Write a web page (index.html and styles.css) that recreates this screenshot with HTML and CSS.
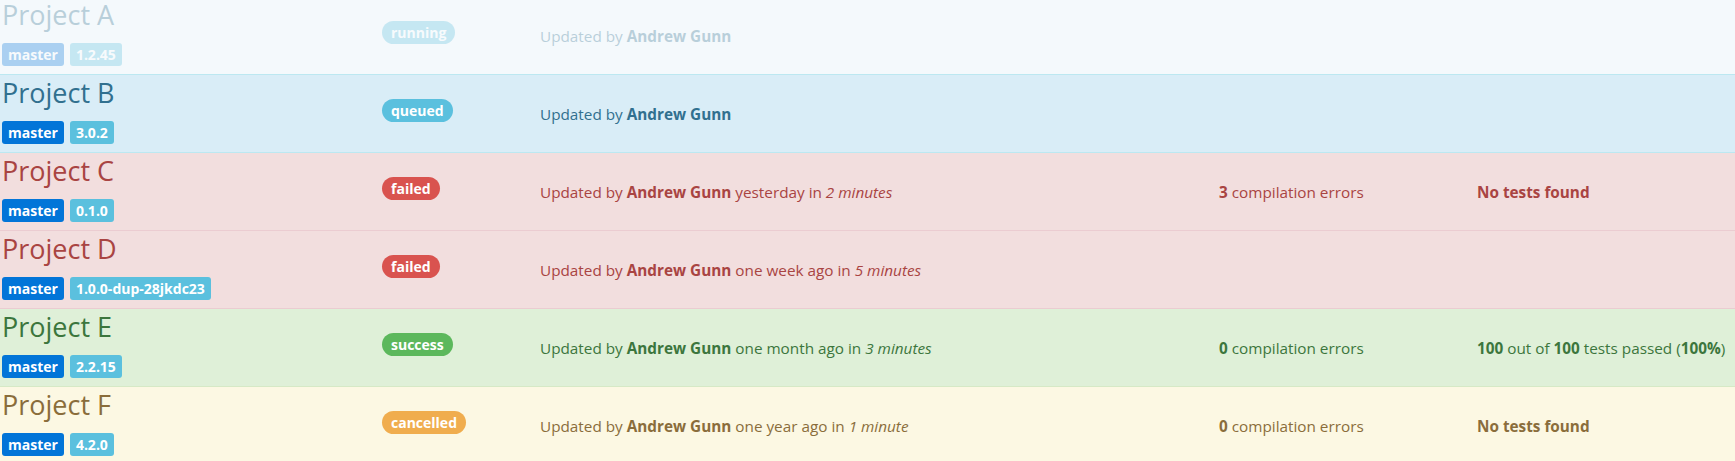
FILE: index.html
```html
<!DOCTYPE html>
<html>
<head>
<meta charset="utf-8">
<link rel="stylesheet" href="styles.css">
</head>
<body>
<div class="table">
  <div class="row row-info faded">
    <div class="cell name"><div class="title">Project A</div><div class="tags"><span class="tag tag-primary">master</span><span class="tag tag-info">1.2.45</span></div></div>
    <div class="cell status"><span class="pill pill-info">running</span></div>
    <div class="cell text">Updated by <b>Andrew Gunn</b></div>
    <div class="cell text"></div>
    <div class="cell text"></div>
  </div>
  <div class="row row-info">
    <div class="cell name"><div class="title">Project B</div><div class="tags"><span class="tag tag-primary">master</span><span class="tag tag-info">3.0.2</span></div></div>
    <div class="cell status"><span class="pill pill-info">queued</span></div>
    <div class="cell text">Updated by <b>Andrew Gunn</b></div>
    <div class="cell text"></div>
    <div class="cell text"></div>
  </div>
  <div class="row row-danger">
    <div class="cell name"><div class="title">Project C</div><div class="tags"><span class="tag tag-primary">master</span><span class="tag tag-info">0.1.0</span></div></div>
    <div class="cell status"><span class="pill pill-danger">failed</span></div>
    <div class="cell text">Updated by <b>Andrew Gunn</b> yesterday in <i>2 minutes</i></div>
    <div class="cell text"><b>3</b> compilation errors</div>
    <div class="cell text"><b>No tests found</b></div>
  </div>
  <div class="row row-danger">
    <div class="cell name"><div class="title">Project D</div><div class="tags"><span class="tag tag-primary">master</span><span class="tag tag-info">1.0.0-dup-28jkdc23</span></div></div>
    <div class="cell status"><span class="pill pill-danger">failed</span></div>
    <div class="cell text">Updated by <b>Andrew Gunn</b> one week ago in <i>5 minutes</i></div>
    <div class="cell text"></div>
    <div class="cell text"></div>
  </div>
  <div class="row row-success">
    <div class="cell name"><div class="title">Project E</div><div class="tags"><span class="tag tag-primary">master</span><span class="tag tag-info">2.2.15</span></div></div>
    <div class="cell status"><span class="pill pill-success">success</span></div>
    <div class="cell text">Updated by <b>Andrew Gunn</b> one month ago in <i>3 minutes</i></div>
    <div class="cell text"><b>0</b> compilation errors</div>
    <div class="cell text"><b>100</b> out of <b>100</b> tests passed (<b>100%</b>)</div>
  </div>
  <div class="row row-warning">
    <div class="cell name"><div class="title">Project F</div><div class="tags"><span class="tag tag-primary">master</span><span class="tag tag-info">4.2.0</span></div></div>
    <div class="cell status"><span class="pill pill-warning">cancelled</span></div>
    <div class="cell text">Updated by <b>Andrew Gunn</b> one year ago in <i>1 minute</i></div>
    <div class="cell text"><b>0</b> compilation errors</div>
    <div class="cell text"><b>No tests found</b></div>
  </div>
</div>
</body>
</html>
```
FILE: styles.css
```css
html, body {
  margin: 0;
  padding: 0;
  background: #ffffff;
  font-family: "Open Sans", "Noto Sans", sans-serif;
}

.table {
  margin-top: -3px;
}

.row {
  display: grid;
  grid-template-columns: 382px 158px 679px 258px 1fr;
  height: 77px;
  border-bottom: 1px solid;
}

.row-info { background: #d9edf7; color: #31708f; border-color: #bce8f1; }
.row-danger { background: #f2dede; color: #a94442; border-color: #ebccd1; }
.row-success { background: #dff0d8; color: #3c763d; border-color: #d6e9c6; }
.row-warning { background: #fcf8e3; color: #8a6d3b; border-color: #faebcc; }

.row.faded { background: #f4f9fc; }
.row.faded .cell { opacity: 0.3; }

.cell {
  min-width: 0;
  white-space: nowrap;
}

.name {
  padding-left: 2px;
  padding-top: 4px;
}

.title {
  font-size: 27px;
  line-height: 28px;
  height: 28px;
}

.tags {
  display: flex;
  gap: 6px;
  margin-top: 14px;
}

.tag {
  display: inline-block;
  height: 23px;
  line-height: 23px;
  padding: 0 6px;
  border-radius: 3px;
  color: #fff;
  font-weight: 700;
  font-size: 14px;
}

.tag-primary { background: #0275d8; }
.tag-info { background: #5bc0de; }

.status {
  padding-top: 24px;
}

.pill {
  display: inline-block;
  height: 23px;
  line-height: 23px;
  padding: 0 9px;
  border-radius: 12px;
  color: #fff;
  font-weight: 700;
  font-size: 14px;
}

.pill-info { background: #5bc0de; }
.pill-danger { background: #d9534f; }
.pill-success { background: #5cb85c; }
.pill-warning { background: #f0ad4e; }

.text {
  font-size: 15.3px;
  line-height: 20px;
  padding-top: 29px;
}

.text b { font-weight: 700; }
.text i { font-style: italic; }
```
